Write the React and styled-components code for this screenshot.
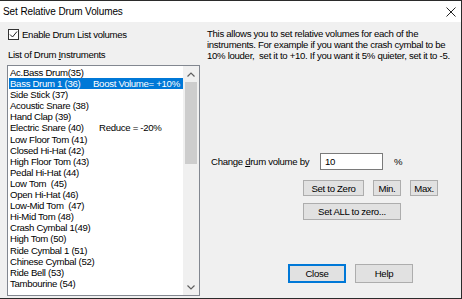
import React from 'react';
import styled, { createGlobalStyle } from 'styled-components';

const GlobalStyle = createGlobalStyle`
  html, body {
    margin: 0;
    padding: 0;
    background: #f0f0f0;
  }
  * {
    box-sizing: border-box;
  }
`;

const Window = styled.div`
  width: 462px;
  height: 299px;
  display: flex;
  flex-direction: column;
  border-top: 1px solid #2b2b2b;
  border-right: 1px solid #2b2b2b;
  border-bottom: 1px solid #2b2b2b;
  background: #f0f0f0;
  font-family: 'Liberation Sans', Arial, sans-serif;
  font-size: 9.6px;
  letter-spacing: -0.3px;
  color: #000;
  overflow: hidden;
`;

const TitleBar = styled.div`
  height: 21px;
  flex: none;
  background: #fff;
  display: flex;
  align-items: center;
  justify-content: space-between;
  padding: 0 5px 0 3px;
`;

const Title = styled.div`
  font-size: 10px;
  letter-spacing: -0.1px;
`;

const Body = styled.div`
  flex: 1;
  display: flex;
  min-height: 0;
`;

const LeftCol = styled.div`
  width: 193px;
  margin-left: 7px;
  display: flex;
  flex-direction: column;
`;

const CheckRow = styled.label`
  display: flex;
  align-items: center;
  gap: 3px;
  margin-top: 7px;
  margin-left: 1px;
  height: 11px;
`;

const Box = styled.span`
  width: 11px;
  height: 11px;
  border: 1px solid #333;
  background: #fff;
  display: flex;
  align-items: center;
  justify-content: center;
`;

const ListLabel = styled.div`
  margin-top: 9px;
  margin-left: 1px;
  line-height: 11px;
`;

const Key = styled.span`
  text-decoration: underline;
`;

const ListBox = styled.div`
  margin-top: 5px;
  height: 231px;
  border: 1px solid #828790;
  background: #fff;
  display: flex;
`;

const Items = styled.div`
  flex: 1;
  padding: 1px 0 0 1px;
`;

const Item = styled.div`
  height: 11.1px;
  line-height: 11.1px;
  padding-left: 1px;
  white-space: nowrap;
  display: flex;
  background: ${p => (p.$selected ? '#0078d7' : 'transparent')};
  color: ${p => (p.$selected ? '#fff' : '#000')};
`;

const Name = styled.span`
  width: ${p => (p.$w ? `${p.$w}px` : 'auto')};
  flex: none;
`;

const ScrollBar = styled.div`
  width: 16px;
  background: #f0f0f0;
  display: flex;
  flex-direction: column;
`;

const Arrow = styled.div`
  height: 16px;
  display: flex;
  align-items: center;
  justify-content: center;
  flex: none;
`;

const Track = styled.div`
  flex: 1;
  padding: 0 2px;
`;

const Thumb = styled.div`
  background: #cdcdcd;
  height: 82px;
`;

const RightCol = styled.div`
  flex: 1;
  margin-left: 7px;
  display: flex;
  flex-direction: column;
`;

const Description = styled.p`
  margin: 6px 0 0;
  line-height: 11px;
  white-space: nowrap;
`;

const ChangeRow = styled.div`
  margin-top: 92px;
  height: 17px;
  display: flex;
  align-items: center;
  padding-left: 4px;
`;

const ChangeLabel = styled.span`
  width: 109px;
`;

const Input = styled.div`
  width: 63px;
  height: 17px;
  border: 1px solid #7a7a7a;
  background: #fff;
  padding: 2px 0 0 4px;
  line-height: 12px;
`;

const Percent = styled.span`
  margin-left: 11px;
`;

const ButtonRow = styled.div`
  display: flex;
  gap: ${p => p.$gap || 8}px;
  margin-top: ${p => p.$top}px;
  margin-left: ${p => p.$left}px;
`;

const Button = styled.div`
  width: ${p => p.$w}px;
  height: ${p => p.$h}px;
  background: #e1e1e1;
  border: 1px solid ${p => (p.$default ? '#0078d7' : '#adadad')};
  box-shadow: ${p => (p.$default ? 'inset 0 0 0 1px #0078d7' : 'none')};
  display: flex;
  align-items: center;
  justify-content: center;
`;

const drums = [
  { name: 'Ac.Bass Drum(35)' },
  { name: 'Bass Drum 1 (36)', note: 'Boost Volume= +10%', w: 83, selected: true },
  { name: 'Side Stick (37)' },
  { name: 'Acoustic Snare (38)' },
  { name: 'Hand Clap (39)' },
  { name: 'Electric Snare (40)', note: 'Reduce = -20%', w: 89 },
  { name: 'Low Floor Tom (41)' },
  { name: 'Closed Hi-Hat (42)' },
  { name: 'High Floor Tom (43)' },
  { name: 'Pedal Hi-Hat (44)' },
  { name: 'Low Tom\u00a0 (45)' },
  { name: 'Open Hi-Hat (46)' },
  { name: 'Low-Mid Tom\u00a0 (47)' },
  { name: 'Hi-Mid Tom (48)' },
  { name: 'Crash Cymbal 1(49)' },
  { name: 'High Tom (50)' },
  { name: 'Ride Cymbal 1 (51)' },
  { name: 'Chinese Cymbal (52)' },
  { name: 'Ride Bell (53)' },
  { name: 'Tambourine (54)' },
];

const App = () => {
  return (
    <Window>
      <GlobalStyle />
      <TitleBar>
        <Title>Set Relative Drum Volumes</Title>
        <svg width="10" height="10" viewBox="0 0 10 10">
          <path d="M0.5 0.5 L9.5 9.5 M9.5 0.5 L0.5 9.5" stroke="#222" strokeWidth="1" />
        </svg>
      </TitleBar>
      <Body>
        <LeftCol>
          <CheckRow>
            <Box>
              <svg width="9" height="9" viewBox="0 0 9 9">
                <path d="M1 4.5 L3.5 7 L8 1.5" stroke="#222" strokeWidth="1" fill="none" />
              </svg>
            </Box>
            Enable Drum List volumes
          </CheckRow>
          <ListLabel>
            List of Drum <Key>I</Key>nstruments
          </ListLabel>
          <ListBox>
            <Items>
              {drums.map(d => (
                <Item key={d.name} $selected={d.selected}>
                  <Name $w={d.w}>{d.name}</Name>
                  {d.note && <span>{d.note}</span>}
                </Item>
              ))}
            </Items>
            <ScrollBar>
              <Arrow>
                <svg width="8" height="5" viewBox="0 0 8 5">
                  <path d="M0.5 4.5 L4 1 L7.5 4.5" stroke="#606060" strokeWidth="1.2" fill="none" />
                </svg>
              </Arrow>
              <Track>
                <Thumb />
              </Track>
              <Arrow>
                <svg width="8" height="5" viewBox="0 0 8 5">
                  <path d="M0.5 0.5 L4 4 L7.5 0.5" stroke="#606060" strokeWidth="1.2" fill="none" />
                </svg>
              </Arrow>
            </ScrollBar>
          </ListBox>
        </LeftCol>
        <RightCol>
          <Description>
            This allows you to set relative volumes for each of the
            <br />
            instruments. For example if you want the crash cymbal to be
            <br />
            10% louder,&nbsp; set it to +10. If you want it 5% quieter, set it to -5.
          </Description>
          <ChangeRow>
            <ChangeLabel>
              Change <Key>d</Key>rum volume by
            </ChangeLabel>
            <Input>10</Input>
            <Percent>%</Percent>
          </ChangeRow>
          <ButtonRow $top={10} $left={96} $gap={9}>
            <Button $w={61} $h={16}>Set to Zero</Button>
            <Button $w={28} $h={16}>Min.</Button>
            <Button $w={28} $h={16}>Max.</Button>
          </ButtonRow>
          <ButtonRow $top={7} $left={96}>
            <Button $w={98} $h={17}>Set ALL to zero...</Button>
          </ButtonRow>
          <ButtonRow $top={44} $left={81} $gap={9}>
            <Button $w={58} $h={19} $default>Close</Button>
            <Button $w={58} $h={19}>Help</Button>
          </ButtonRow>
        </RightCol>
      </Body>
    </Window>
  );
};

export default App;
